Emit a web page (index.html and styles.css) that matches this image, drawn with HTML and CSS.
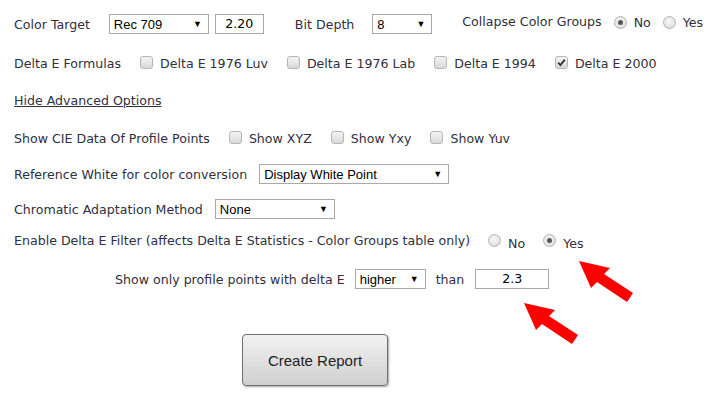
FILE: index.html
```html
<!DOCTYPE html>
<html>
<head>
<meta charset="utf-8">
<link rel="stylesheet" href="styles.css">
</head>
<body>
<div class="page">
  <div class="row r1">
    <span class="lbl">Color Target</span>
    <div class="sel sel-target"><span>Rec 709</span><span class="arr">▼</span></div>
    <div class="inp inp-gamma">2.20</div>
    <span class="lbl lbl-bit">Bit Depth</span>
    <div class="sel sel-bit"><span>8</span><span class="arr">▼</span></div>
    <span class="lbl lbl-collapse">Collapse Color Groups</span>
    <span class="radio checked"></span><span class="opt">No</span>
    <span class="radio"></span><span class="opt">Yes</span>
  </div>
  <div class="row r2">
    <span class="lbl">Delta E Formulas</span>
    <span class="cb"></span><span class="opt">Delta E 1976 Luv</span>
    <span class="cb"></span><span class="opt">Delta E 1976 Lab</span>
    <span class="cb"></span><span class="opt">Delta E 1994</span>
    <span class="cb checked"><svg viewBox="0 0 13 13" width="13" height="13"><path d="M3.2 6.6 L5.4 9 L9.8 3.6" fill="none" stroke="#333" stroke-width="1.8"/></svg></span><span class="opt">Delta E 2000</span>
  </div>
  <div class="row r3">
    <a class="link">Hide Advanced Options</a>
  </div>
  <div class="row r4">
    <span class="lbl">Show CIE Data Of Profile Points</span>
    <span class="cb"></span><span class="opt">Show XYZ</span>
    <span class="cb"></span><span class="opt">Show Yxy</span>
    <span class="cb"></span><span class="opt">Show Yuv</span>
  </div>
  <div class="row r5">
    <span class="lbl">Reference White for color conversion</span>
    <div class="sel sel-white"><span>Display White Point</span><span class="arr">▼</span></div>
  </div>
  <div class="row r6">
    <span class="lbl">Chromatic Adaptation Method</span>
    <div class="sel sel-chrom"><span>None</span><span class="arr">▼</span></div>
  </div>
  <div class="row r7">
    <span class="lbl">Enable Delta E Filter (affects Delta E Statistics - Color Groups table only)</span>
    <span class="radio"></span><span class="opt low">No</span>
    <span class="radio checked"></span><span class="opt low">Yes</span>
  </div>
  <div class="row r8">
    <span class="lbl">Show only profile points with delta E</span>
    <div class="sel sel-higher"><span>higher</span><span class="arr">▼</span></div>
    <span class="lbl lbl-than">than</span>
    <div class="inp inp-delta">2.3</div>
  </div>
  <div class="row r9">
    <button class="btn">Create Report</button>
  </div>
  <svg class="arrows" width="714" height="399" viewBox="0 0 714 399">
    <polygon fill="#ff0000" points="579,261 610,268 604,274 633,293 627,302 597,282 591,288"/>
    <polygon fill="#ff0000" points="524,303 555,310 549,316 578,335 572,344 542,324 536,330"/>
  </svg>
</div>
</body>
</html>
```

FILE: styles.css
```css
html, body {
  margin: 0;
  padding: 0;
  background: #ffffff;
}
.page {
  position: relative;
  width: 714px;
  height: 399px;
  padding: 14px 0 0 14px;
  box-sizing: border-box;
  font-family: "DejaVu Sans", Verdana, sans-serif;
  font-size: 12.6px;
  color: #30303e;
}
.row {
  display: flex;
  align-items: center;
  height: 20px;
  white-space: nowrap;
}
.r2 { margin-top: 19px; }
.r3 { margin-top: 17px; }
.r4 { margin-top: 18px; }
.r5 { margin-top: 16px; }
.r6 { margin-top: 15px; }
.r7 { margin-top: 11px; }
.r8 { margin-top: 19px; padding-left: 101px; }
.r9 { margin-top: 45px; padding-left: 228px; height: auto; }

.sel {
  display: flex;
  align-items: center;
  justify-content: space-between;
  box-sizing: border-box;
  height: 20px;
  border: 1px solid #a9a9a9;
  padding: 0 6px 0 4px;
  font-family: "Liberation Sans", Arial, sans-serif;
  font-size: 13px;
  color: #000;
  background: #fff;
}
.arr { font-size: 9px; }
.sel-target { width: 100px; margin-left: 19px; }
.sel-bit { width: 60px; margin-left: 18px; }
.sel-white { width: 190px; margin-left: 12px; }
.sel-chrom { width: 120px; margin-left: 12px; }
.sel-higher { width: 71px; margin-left: 10px; }

.inp {
  box-sizing: border-box;
  height: 20px;
  border: 1px solid #a9a9a9;
  text-align: center;
  line-height: 18px;
  color: #000;
}
.inp-gamma { width: 49px; margin-left: 6px; }
.inp-delta { width: 74px; margin-left: 11px; }
.lbl-bit { margin-left: 31px; }
.lbl-than { margin-left: 10px; }
.lbl-collapse { margin-left: 30px; position: relative; top: -3px; }

.cb {
  display: inline-block;
  box-sizing: border-box;
  width: 13px;
  height: 13px;
  margin-left: 19px;
  margin-right: 7px;
  border: 1px solid #b5b5b5;
  border-radius: 3px;
  background: linear-gradient(#f4f4f4, #d9d9d9);
  flex: none;
  position: relative;
  top: -1px;
}
.cb svg { display: block; margin: -1px; }

.radio {
  display: inline-block;
  box-sizing: border-box;
  width: 13px;
  height: 13px;
  margin-left: 14px;
  margin-right: 7px;
  border: 1px solid #b5b5b5;
  border-radius: 50%;
  background: radial-gradient(circle at 45% 40%, #fafafa, #d4d4d4);
  flex: none;
  position: relative;
}
.radio.checked::after {
  content: "";
  position: absolute;
  left: 3px;
  top: 3px;
  width: 5px;
  height: 5px;
  border-radius: 50%;
  background: #555;
}
.r1 .radio { margin-left: 12px; }
.r1 .opt, .r1 .radio { position: relative; top: -2px; }
.r7 .radio { margin-left: 18px; }
.opt.low { position: relative; top: 3px; }

.link {
  text-decoration: underline;
  color: #30303e;
}

.btn {
  width: 146px;
  height: 52px;
  border: 1px solid #6f6f6f;
  border-radius: 4px;
  background: linear-gradient(#f2f2f2, #cfcfcf);
  box-shadow: 1px 1px 2px rgba(0,0,0,0.35);
  font-family: "Liberation Sans", Arial, sans-serif;
  font-size: 15px;
  color: #222;
  padding: 0;
}

.arrows {
  position: absolute;
  left: 0;
  top: 0;
  pointer-events: none;
}
```
